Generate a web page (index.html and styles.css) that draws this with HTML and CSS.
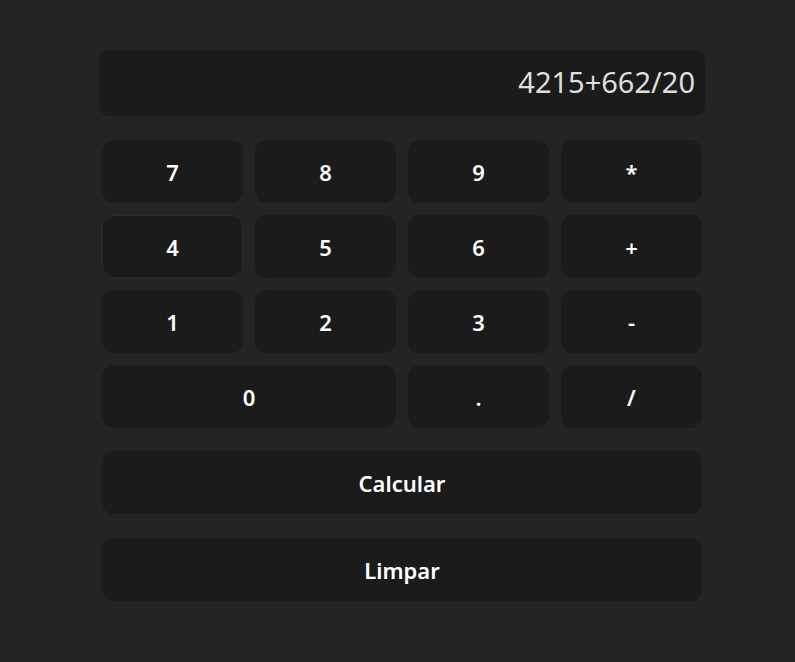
FILE: index.html
```html
<!DOCTYPE html>
<html lang="pt">
<head>
<meta charset="utf-8">
<title>Calculadora</title>
<link rel="stylesheet" href="styles.css">
</head>
<body>
<div class="calculator">
  <div class="display">4215+662/20</div>
  <div class="keypad">
    <button class="key">7</button>
    <button class="key">8</button>
    <button class="key">9</button>
    <button class="key">*</button>
    <button class="key key-hover">4</button>
    <button class="key">5</button>
    <button class="key">6</button>
    <button class="key">+</button>
    <button class="key">1</button>
    <button class="key">2</button>
    <button class="key">3</button>
    <button class="key">-</button>
    <button class="key key-wide">0</button>
    <button class="key">.</button>
    <button class="key">/</button>
  </div>
  <div class="actions">
    <button class="key action">Calcular</button>
    <button class="key action">Limpar</button>
  </div>
</div>
</body>
</html>
```

FILE: styles.css
```css
html, body {
  margin: 0;
  padding: 0;
  background: #242424;
}
body {
  font-family: "Noto Sans", "Open Sans", "DejaVu Sans", sans-serif;
  color: rgba(255,255,255,0.87);
  padding-top: 50px;
}
.calculator {
  width: 606px;
  margin-left: 99px;
}
.display {
  height: 66px;
  box-sizing: border-box;
  background: #1b1b1b;
  border-radius: 10px;
  display: flex;
  align-items: center;
  justify-content: flex-end;
  padding-right: 10px;
  padding-bottom: 3px;
  font-size: 29px;
  color: #dedede;
}
.keypad {
  margin-top: 24px;
  padding: 0 3px;
  display: grid;
  grid-template-columns: repeat(4, 1fr);
  grid-auto-rows: 63px;
  gap: 12px;
}
.key {
  box-sizing: border-box;
  border: 1px solid transparent;
  background: #1b1b1b;
  border-radius: 12px;
  color: #ffffff;
  font-family: inherit;
  font-size: 22px;
  font-weight: 600;
  padding: 0;
  margin: 0;
  display: flex;
  align-items: center;
  justify-content: center;
}
.key-hover {
  border-color: #2a2839;
}
.key-wide {
  grid-column: span 2;
}
.actions {
  margin-top: 23px;
  padding: 0 3px;
  display: flex;
  flex-direction: column;
  gap: 24px;
}
.action {
  height: 63px;
  width: 100%;
}
```
